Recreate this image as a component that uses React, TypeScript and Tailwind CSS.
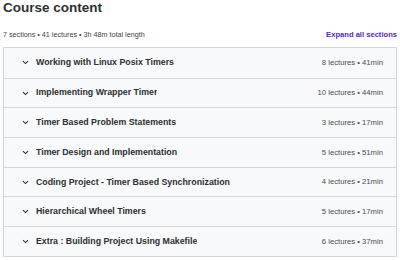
const sections = [
  { title: 'Working with Linux Posix Timers', meta: '8 lectures • 41min' },
  { title: 'Implementing Wrapper Timer', meta: '10 lectures • 44min' },
  { title: 'Timer Based Problem Statements', meta: '3 lectures • 17min' },
  { title: 'Timer Design and Implementation', meta: '5 lectures • 51min' },
  { title: 'Coding Project - Timer Based Synchronization', meta: '4 lectures • 21min' },
  { title: 'Hierarchical Wheel Timers', meta: '5 lectures • 17min' },
  { title: 'Extra : Building Project Using Makefile', meta: '6 lectures • 37min' },
]

function Chevron() {
  return (
    <svg width="7" height="5" viewBox="0 0 7 5" className="shrink-0">
      <path d="M1 1.2 L3.5 3.6 L6 1.2" fill="none" stroke="#2d2f31" strokeWidth="1.1" />
    </svg>
  )
}

export default function App() {
  return (
    <div className="w-[400px] h-[260px] bg-white overflow-hidden px-[3px] font-['Liberation_Sans',Arial,sans-serif] text-[#2d2f31]">
      <h2 className="text-[13.5px] leading-[16px] font-bold">Course content</h2>
      <div className="flex items-end justify-between mt-[14px] mb-[7px] h-[10px]">
        <span className="text-[7.2px] leading-[10px] text-[#3e4143]">7 sections • 41 lectures • 3h 48m total length</span>
        <span className="text-[7.6px] leading-[10px] font-bold text-[#5624d0]">Expand all sections</span>
      </div>
      <div className="border border-[#d1d7dc]">
        {sections.map(({ title, meta }, i) => (
          <div
            key={title}
            className={`flex items-center h-[29.7px] bg-[#f7f9fa] pl-[18px] pr-[13px] ${i > 0 ? 'border-t border-[#d1d7dc]' : ''}`}
          >
            <Chevron />
            <span className="ml-[7px] text-[8.8px] font-bold truncate">{title}</span>
            <span className="ml-auto text-[7.7px] text-[#4a4e51] shrink-0">{meta}</span>
          </div>
        ))}
      </div>
    </div>
  )
}
